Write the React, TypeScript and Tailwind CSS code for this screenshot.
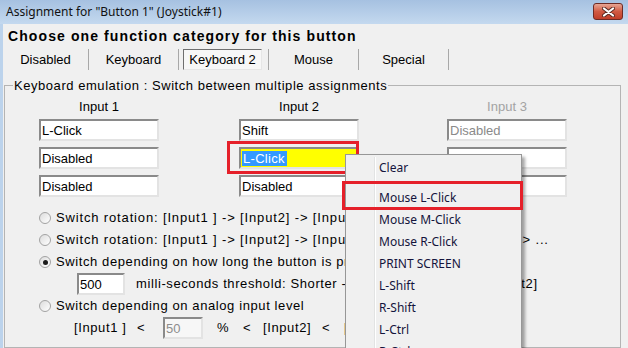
import React from "react";

const menuItems = [
  "Clear",
  "-",
  "Mouse L-Click",
  "Mouse M-Click",
  "Mouse R-Click",
  "PRINT SCREEN",
  "L-Shift",
  "R-Shift",
  "L-Ctrl",
  "R-Ctrl",
];

function Edit({ children, className = "" }: { children?: React.ReactNode; className?: string }) {
  return (
    <div
      className={`h-[22px] border-2 border-[#e3e3e3] border-t-[#8a8a8a] border-l-[#8a8a8a] pl-[1px] flex items-center text-[13px] leading-[15px] tracking-normal ${className}`}
    >
      {children}
    </div>
  );
}

function Radio({ checked }: { checked?: boolean }) {
  return (
    <div className="w-[12px] h-[12px] rounded-full border border-[#a2a2a2] bg-linear-to-br from-[#dcdcdc] to-[#ffffff] flex items-center justify-center shrink-0">
      {checked && <div className="w-[5px] h-[5px] rounded-full bg-[#1b1b1b]" />}
    </div>
  );
}

function Tab({ label, active, wide }: { label: string; active?: boolean; wide?: boolean }) {
  return (
    <div className={`${wide ? "w-[85px]" : "w-[89px]"} flex items-center justify-center`}>
      {active ? (
        <div className="ml-[-2px] w-[79px] h-[21px] flex items-center justify-center bg-[#f7f7f7] border border-[#e6e6e6] border-t-[#6f6f6f] border-l-[#6f6f6f]">
          {label}
        </div>
      ) : (
        label
      )}
    </div>
  );
}

export default function App() {
  return (
    <div className="relative w-[628px] h-[348px] overflow-hidden bg-[#bcd3ec] font-['Liberation_Sans',Arial,sans-serif] text-black">
      {/* Title bar */}
      <div className="h-[24px] flex items-center justify-between pl-[6px] pr-[5px] bg-linear-to-b from-[#a6c1e1] to-[#c4d9ef]">
        <span className="text-[12px] font-['Noto_Sans',sans-serif] text-[#111]">
          Assignment for "Button 1" (Joystick#1)
        </span>
        <div className="mt-[-1px] w-[30px] h-[17px] rounded-[3px] border border-[#6e2b25] bg-linear-to-b from-[#e7a594] via-[#d15a43] to-[#c13e29] flex items-center justify-center">
          <svg width="13" height="10" viewBox="0 0 13 10">
            <path d="M2 1.5 L11 8.5 M11 1.5 L2 8.5" stroke="#5a2a22" strokeWidth="4" strokeLinecap="round" />
            <path d="M2 1.5 L11 8.5 M11 1.5 L2 8.5" stroke="#ffffff" strokeWidth="2.2" strokeLinecap="round" />
          </svg>
        </div>
      </div>

      {/* Client area */}
      <div className="ml-[3px] h-[324px] bg-[#f0f0f0] text-[13px]">
        <div className="h-[24px] flex items-center pl-[5px] text-[14px] font-bold tracking-[1.1px]">
          Choose one function category for this button
        </div>

        <div className="h-[22px] pt-[1px] flex">
          <Tab label="Disabled" wide />
          <div className="w-px bg-[#a8a8a8]" />
          <Tab label="Keyboard" />
          <div className="w-px bg-[#a8a8a8]" />
          <Tab label="Keyboard 2" active />
          <div className="w-px bg-[#a8a8a8]" />
          <Tab label="Mouse" />
          <div className="w-px bg-[#a8a8a8]" />
          <Tab label="Special" />
          <div className="w-px bg-[#a8a8a8]" />
        </div>

        <fieldset className="mt-[8px] ml-[1px] w-[617px] h-[270px] border border-[#b4b4b4] pl-[8px]">
          <legend className="px-[1px] leading-[15px] tracking-[0.55px]">
            Keyboard emulation : Switch between multiple assignments
          </legend>

          <div className="flex ml-[26px] mt-[6px]">
            <div className="w-[120px] flex flex-col gap-[6px]">
              <div className="h-[16px] mb-[-2px] flex items-center justify-center">Input 1</div>
              <Edit className="bg-white">L-Click</Edit>
              <Edit className="bg-white">Disabled</Edit>
              <Edit className="bg-white">Disabled</Edit>
            </div>
            <div className="ml-[80px] w-[120px] flex flex-col gap-[6px]">
              <div className="h-[16px] mb-[-2px] flex items-center justify-center">Input 2</div>
              <Edit className="bg-white">Shift</Edit>
              <Edit className="bg-[#ffff00]">
                <span className="bg-[#3399ff] text-white pl-[1px] pr-[2px] tracking-[0.3px]">L-Click</span>
              </Edit>
              <Edit className="bg-white">Disabled</Edit>
            </div>
            <div className="ml-[88px] w-[120px] flex flex-col gap-[6px]">
              <div className="h-[16px] mb-[-2px] flex items-center justify-center text-[#a3a3a3]">Input 3</div>
              <Edit className="bg-white text-[#8a8a8a]">Disabled</Edit>
              <Edit className="bg-white" />
              <Edit className="bg-white" />
            </div>
          </div>

          <div className="mt-[10px] flex flex-col whitespace-nowrap tracking-[0.6px]">
            <div className="h-[22px] flex items-center ml-[26px] gap-[5px]">
              <Radio />
              <span className="tracking-[0.85px]">Switch rotation: [Input1 ] -&gt; [Input2] -&gt; [Input1 ] -&gt; ...</span>
            </div>
            <div className="h-[22px] flex items-center ml-[26px] gap-[5px]">
              <Radio />
              <span className="tracking-[0.85px]">Switch rotation: [Input1 ] -&gt; [Input2] -&gt; [Input3] -&gt; [Input1 ] -&gt; [Input2] -&gt; ...</span>
            </div>
            <div className="h-[22px] flex items-center ml-[26px] gap-[5px]">
              <Radio checked />
              <span>Switch depending on how long the button is pressed</span>
            </div>
            <div className="h-[22px] flex items-center ml-[64px]">
              <Edit className="w-[48px] bg-white">500</Edit>
              <span className="ml-[11px]">milli-seconds threshold: Shorter -&gt; [Input1 ] / Longer -&gt; [Input2]</span>
            </div>
            <div className="h-[22px] flex items-center ml-[26px] gap-[5px]">
              <Radio />
              <span>Switch depending on analog input level</span>
            </div>
            <div className="h-[22px] flex items-center ml-[61px]">
              <span className="w-[63px]">[Input1 ]</span>
              <span className="w-[26px]">&lt;</span>
              <Edit className="w-[40px] bg-[#f7f7f7] text-[#8d8d8d]">50</Edit>
              <span className="ml-[14px] w-[26px]">%</span>
              <span className="w-[20px]">&lt;</span>
              <span className="w-[59px]">[Input2]</span>
              <span className="w-[22px]">&lt;</span>
              <span>[Input3]</span>
            </div>
          </div>
        </fieldset>
      </div>

      {/* Red highlight on the edited box */}
      <div className="absolute left-[227px] top-[141px] w-[132px] h-[33px] border-[3px] border-[#e5202a]" />

      {/* Context menu */}
      <div className="absolute left-[345px] top-[154px] w-[177px] h-[210px] bg-[#f0f0f0] border border-[#979797] shadow-[3px_3px_3px_rgba(0,0,0,0.35)] pt-[2px] font-['Noto_Sans',sans-serif] text-[12px] text-[#14143c]">
        <div className="absolute left-[28px] top-[2px] bottom-0 w-px bg-[#e2e3e3]" />
        <div className="absolute left-[29px] top-[2px] bottom-0 w-px bg-white" />
        {menuItems.map((m) =>
          m === "-" ? (
            <div key="sep" className="h-[8px] flex items-center pl-[30px]">
              <div className="h-px w-full bg-[#e2e3e3]" />
            </div>
          ) : (
            <div key={m} className="h-[22px] flex items-center pl-[33px] relative">
              {m}
            </div>
          )
        )}
      </div>

      {/* Red highlight on the menu item */}
      <div className="absolute left-[342px] top-[181px] w-[181px] h-[29px] border-[3px] border-[#e5202a]" />
    </div>
  );
}
